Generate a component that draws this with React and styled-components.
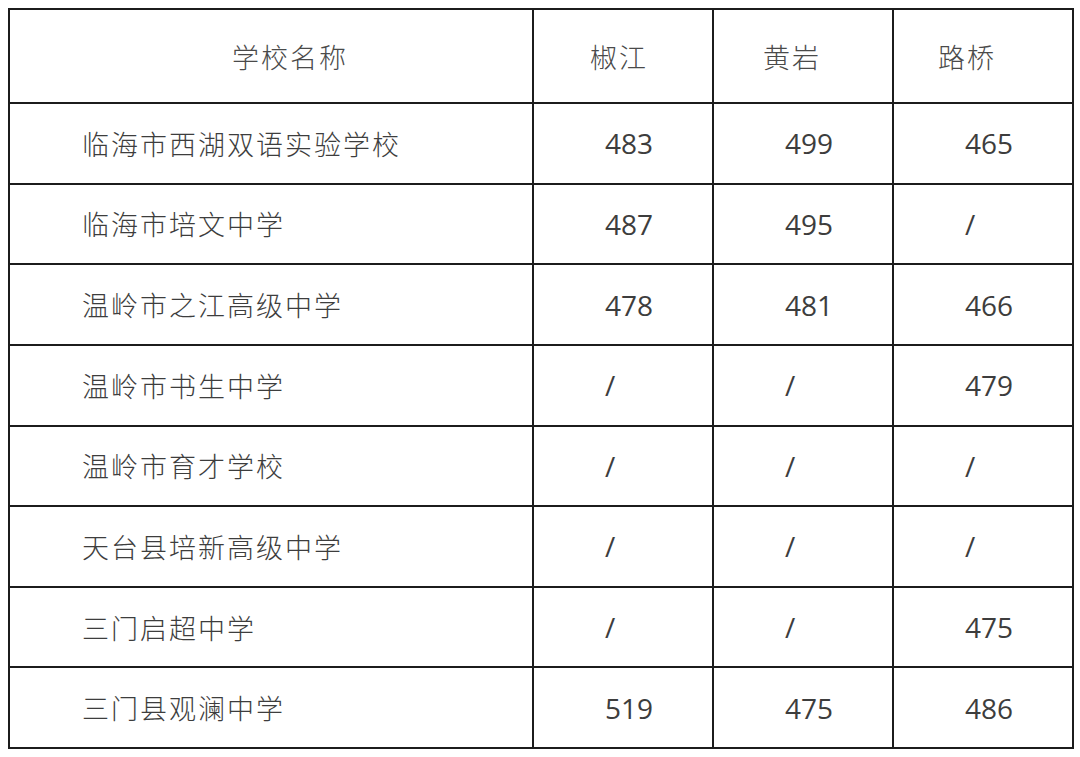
import styled, { createGlobalStyle } from "styled-components";

const GlobalStyle = createGlobalStyle`
  html, body {
    margin: 0;
    background: #fff;
  }
`;

const schools = [
  ["临海市西湖双语实验学校", "483", "499", "465"],
  ["临海市培文中学", "487", "495", "/"],
  ["温岭市之江高级中学", "478", "481", "466"],
  ["温岭市书生中学", "/", "/", "479"],
  ["温岭市育才学校", "/", "/", "/"],
  ["天台县培新高级中学", "/", "/", "/"],
  ["三门启超中学", "/", "/", "475"],
  ["三门县观澜中学", "519", "475", "486"],
];

const headers = [
  { label: "学校名称", shift: 19 },
  { label: "椒江", shift: -4 },
  { label: "黄岩", shift: -11 },
  { label: "路桥", shift: -16 },
];

const App = () => {
  return (
    <Page>
      <GlobalStyle />
      <Grid>
        {headers.map((h) => (
          <HeadCell key={h.label} $shift={h.shift}>
            {h.label}
          </HeadCell>
        ))}
        {schools.map((row) =>
          row.map((value, i) => (
            <Cell key={row[0] + i} $name={i === 0}>
              {value}
            </Cell>
          ))
        )}
      </Grid>
    </Page>
  );
};

const Page = styled.div`
  padding: 8px;
`;

const Grid = styled.div`
  display: grid;
  grid-template-columns: 522px repeat(3, 178px);
  grid-template-rows: 92px repeat(8, 1fr);
  gap: 2px;
  padding: 2px;
  width: 1066px;
  height: 741px;
  box-sizing: border-box;
  background: #1c1c1c;
`;

const HeadCell = styled.div`
  display: flex;
  align-items: center;
  justify-content: center;
  background: #fff;
  padding-left: ${(p) => (p.$shift > 0 ? p.$shift * 2 : 0)}px;
  padding-right: ${(p) => (p.$shift < 0 ? -p.$shift * 2 : 0)}px;
  font-family: "Noto Sans CJK SC", sans-serif;
  font-weight: 300;
  font-size: 27px;
  letter-spacing: 2px;
  color: #4a4a4a;
`;

const Cell = styled.div`
  display: flex;
  align-items: center;
  background: #fff;
  padding-left: ${(p) => (p.$name ? 72 : 71)}px;
  font-family: ${(p) =>
    p.$name ? '"Noto Sans CJK SC", sans-serif' : '"Open Sans", "Noto Sans CJK SC", sans-serif'};
  font-weight: ${(p) => (p.$name ? 300 : 400)};
  font-size: ${(p) => (p.$name ? 27 : 28)}px;
  letter-spacing: ${(p) => (p.$name ? 2 : 0)}px;
  color: #3d3d3d;
`;

export default App;
